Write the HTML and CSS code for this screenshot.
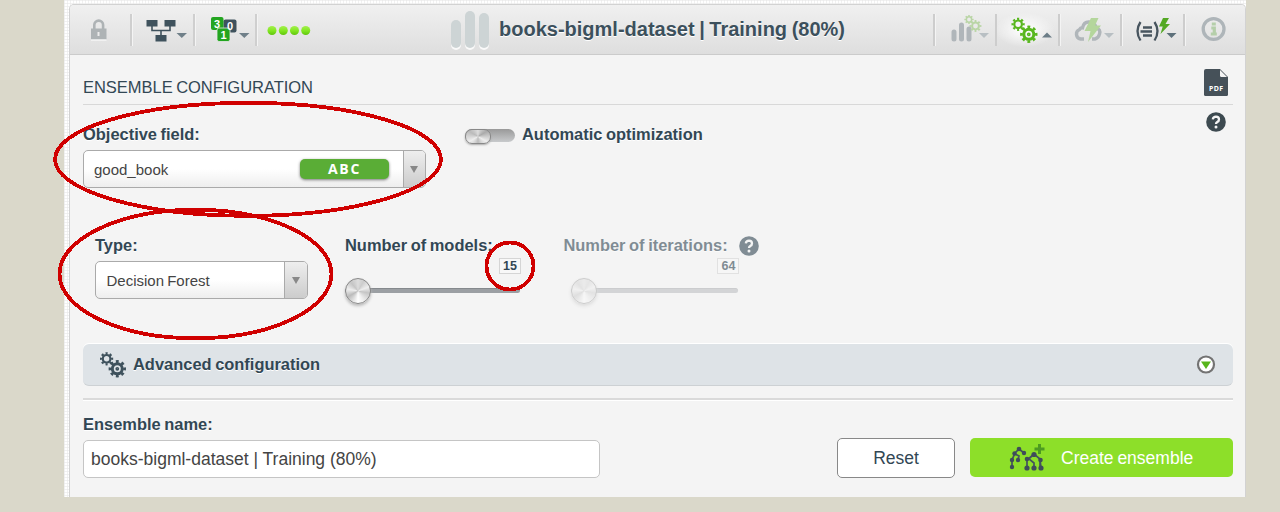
FILE: index.html
```
<!DOCTYPE html>
<html lang="en">
<head>
<meta charset="utf-8">
<title>Ensemble configuration</title>
<link rel="stylesheet" href="styles.css">
</head>
<body>
<svg width="0" height="0" class="defs">
  <defs>
    <g id="gear" fill="none" stroke="currentColor">
      <circle r="5" stroke-width="3"/>
      <circle r="7.3" stroke-width="2.800" pathLength="16" stroke-dasharray="1 1" stroke-dashoffset=".5"/>
      <circle r="1.100" stroke-width="1.600"/>
    </g>
    <g id="gear-small" fill="none" stroke="currentColor">
      <circle r="3.8" stroke-width="2.200"/>
      <circle r="5.5" stroke-width="2.200" pathLength="16" stroke-dasharray="1 1" stroke-dashoffset=".5"/>
    </g>
    <g id="gears">
      <use href="#gear-small" x="6.6" y="6.8"/>
      <use href="#gear" x="17.3" y="16.8"/>
    </g>
    <g id="help">
      <circle cx="10" cy="10" r="9.8" fill="currentColor"/>
      <path d="M6.8 7.3Q7.2 4.7 10 4.7Q13 4.8 13 7.4Q13 9 11.3 10Q10 10.8 10 12.1" fill="none" stroke="#f4f4f4" stroke-width="2.3"/>
      <circle cx="10" cy="14.9" r="1.5" fill="#f4f4f4"/>
    </g>
    <linearGradient id="ball" x2="0" y2="1"><stop stop-color="#a4f04f"/><stop offset=".55" stop-color="#80e61f"/><stop offset="1" stop-color="#60c40e"/></linearGradient>
  </defs>
</svg>
<main class="window">
  <section class="panel">
    <header class="toolbar">
      <div class="cell cell-lock">
        <svg width="18" height="22" viewBox="0 0 18 22"><path d="M4.300 11V6a4.400 4.400 0 0 1 8.800 0v5" fill="none" stroke="#aeb3b5" stroke-width="2.600"/><path d="M1 9.500h15.500v11H1z" fill="#aeb3b5"/><path d="M1 21h15.500" stroke="#fff"/><path d="M7.500 13h2v4h-2z" fill="#ececec"/></svg>
      </div>
      <div class="cell cell-tree">
        <svg width="44" height="26" viewBox="0 0 44 26"><g fill="#3f525d"><path d="M1.500 3h11v6.500h-11zM19.500 3h11v6.500h-11zM10.500 18h11v6.500h-11z"/></g><path d="M7 9v4.500h18V9M16 13.500V18" fill="none" stroke="#3f525d" stroke-width="1.600"/><path d="M31.500 16h10.500l-5.200 5z" fill="#708089"/></svg>
      </div>
      <div class="cell cell-num">
        <svg class="digits" width="42" height="28" viewBox="0 0 42 28"><rect x="13.500" y="3.500" width="13" height="13" rx="2" fill="#3f525d"/><rect x="1" y="1" width="12.500" height="13" rx="2" fill="#23a520"/><rect x="7" y="12" width="13" height="13.500" rx="2" fill="#23a520" stroke="#e8e8e8" stroke-width=".8"/><text x="7" y="11.500">3</text><text x="20" y="14">0</text><text x="13.500" y="23">1</text><path d="M29 17h10.500l-5.200 5z" fill="#708089"/></svg>
      </div>
      <div class="cell cell-dots">
        <svg width="44" height="12" viewBox="0 0 44 12" fill="url(#ball)"><circle cx="5" cy="6.500" r="4.500"/><circle cx="16.300" cy="6.500" r="4.500"/><circle cx="27.500" cy="6.500" r="4.500"/><circle cx="38.700" cy="6.500" r="4.500"/></svg>
      </div>
      <h1 class="title">
        <svg width="38" height="40" viewBox="0 0 38 40"><g fill="#fafafa"><rect y="12" width="10" height="28" rx="5"/><rect x="14" y="3" width="10" height="37" rx="5"/><rect x="28" y="5" width="10" height="35" rx="5"/></g><g fill="#cdd4d5"><rect y="10" width="10" height="28" rx="5"/><rect x="14" y="1" width="10" height="37" rx="5"/><rect x="28" y="3" width="10" height="35" rx="5"/></g></svg>
        <span>books-bigml-dataset | Training (80%)</span>
      </h1>
      <div class="cell cell-action">
        <svg width="62" height="40" viewBox="0 0 62 40"><path d="M19 22v7M26.500 15v14M34 19v10" stroke="#b0b6ba" stroke-width="5" stroke-linecap="round"/><g color="#b9d5a5"><use href="#gear-small" transform="translate(34 9.500) scale(.7)"/><use href="#gear-small" transform="translate(40.500 16) scale(.9)"/></g><path d="M44 23h10l-5 5z" fill="#b8bfc3"/></svg>
      </div>
      <div class="cell cell-action active">
        <svg width="62" height="40" viewBox="0 0 62 40"><g color="#59b71f"><use href="#gears" transform="translate(14.500 7.500)"/></g><path d="M45 27.500h10l-5-5z" fill="#6c7d87"/></svg>
      </div>
      <div class="cell cell-action">
        <svg width="62" height="40" viewBox="0 0 62 40"><path d="M24 29h-3.500a5 5 0 0 1-1-9.500q1-2 3-1.700 1.500-7 8.500-5.600 4.500 1 5 6 5 1 3.500 6-1 4-4.500 4.800h-3" fill="none" stroke="#b0b6ba" stroke-width="3.400"/><path d="M31 8h7.500L35 15.500h6L28 32l2.500-11h-6z" fill="#b4d69c"/><path d="M44 23h10l-5 5z" fill="#b8bfc3"/></svg>
      </div>
      <div class="cell cell-action">
        <svg width="62" height="40" viewBox="0 0 62 40"><path d="M18.500 12q-6 9 0 18.500M32.500 12q6 9 0 18.500M21 17.500h9M18.500 21.500h11.500M21 25.500h9" fill="none" stroke="#48555f" stroke-width="2.300"/><path d="M41 8h6l-3.500 6h4.500L38.500 24l2.200-7.500H37z" fill="#53a824"/><path d="M44.500 23h10l-5 5z" fill="#5d707a"/></svg>
      </div>
      <div class="cell cell-action">
        <svg width="60" height="40" viewBox="0 0 60 40"><circle cx="28.600" cy="19" r="10.400" fill="none" stroke="#aeb5b9" stroke-width="3.300"/><path d="M26.800 14h4M26.300 18h3v6M25.800 24h6" fill="none" stroke="#b5cfaa" stroke-width="3.200"/></svg>
      </div>
    </header>
    <div class="content">
      <div class="section-head">
        <h2>ENSEMBLE CONFIGURATION</h2>
        <svg class="pdf" width="24" height="28" viewBox="0 0 24 28"><path d="M2 0h14l8 8v17.500q0 1.500-1.500 1.500h-21Q0 27 0 25.500V2Q0 0 2 0z" fill="#465159"/><path d="M16 1l7 7h-5.500Q16 8 16 6.500z" fill="#f4f4f4"/><text x="12.200" y="22">PDF</text></svg>
      </div>
      <div class="row objective">
        <div class="field">
          <label>Objective field:</label>
          <div class="select select-wide"><span>good_book</span><b class="tag">ABC</b><i class="drop"></i></div>
        </div>
        <div class="toggle-line"><i class="toggle"><i></i></i><label>Automatic optimization</label></div>
        <svg class="page-help" width="20" height="20"><use href="#help"/></svg>
      </div>
      <div class="row options">
        <div class="field type">
          <label>Type:</label>
          <div class="select"><span>Decision Forest</span><i class="drop"></i></div>
        </div>
        <div class="slider models">
          <label>Number of models:</label>
          <output>15</output>
          <div class="track"><i class="knob"></i></div>
        </div>
        <div class="slider iterations">
          <div class="slider-label"><label>Number of iterations:</label><svg width="20" height="20"><use href="#help"/></svg></div>
          <output>64</output>
          <div class="track"><i class="knob"></i></div>
        </div>
      </div>
      <div class="advanced">
        <svg class="adv-gears" width="28" height="28"><use href="#gears"/></svg>
        <span>Advanced configuration</span>
        <svg class="expand" width="20" height="20" viewBox="0 0 20 20"><circle cx="10" cy="9.500" r="8" fill="#fff" stroke="#737373" stroke-width="2.200"/><path d="M5 6.500h10l-5 7.500z" fill="#58b51c"/></svg>
      </div>
      <footer class="footer">
        <div class="name-field"><label>Ensemble name:</label><input value="books-bigml-dataset | Training (80%)"></div>
        <button class="reset">Reset</button>
        <button class="create">
          <svg width="36" height="30" viewBox="0 0 36 30"><g stroke="#43545d" fill="none" stroke-width="1.700"><path d="M3 26v-7l3-7 4-4 5 4M6 13l4 2-1 4M18 27v-8l7-6 6 5 1 9M25 13l-5 5 5 4v5M31 18v9"/></g><g fill="#3f4d5a"><circle cx="3" cy="26" r="2.200"/><circle cx="3" cy="19" r="2.200"/><circle cx="5.500" cy="12.500" r="2.200"/><circle cx="10" cy="8" r="2.300"/><circle cx="15" cy="12" r="2.200"/><circle cx="9" cy="19" r="2.200"/><circle cx="18" cy="18" r="2.300"/><circle cx="25" cy="13.500" r="2.600"/><circle cx="31.500" cy="19" r="2.300"/><circle cx="18" cy="27" r="2.600"/><circle cx="25" cy="27" r="2.600"/><circle cx="32" cy="27" r="2.600"/></g><path d="M30.500 3v10M25.500 8h10" stroke="#4d9b21" stroke-width="3"/></svg>
          <span>Create ensemble</span>
        </button>
      </footer>
    </div>
  </section>
</main>
<svg class="marks" width="1280" height="512" fill="none" stroke="#d00000" stroke-width="3.800" shape-rendering="crispEdges">
  <ellipse cx="248" cy="159.300" rx="193" ry="56.500"/>
  <ellipse cx="195.500" cy="274" rx="136" ry="64.300"/>
  <circle cx="510" cy="266" r="23.500"/>
</svg>
</body>
</html>
```
FILE: styles.css
```
* { box-sizing: border-box; }
body { margin: 0; width: 1280px; height: 512px; overflow: hidden; background: #dad8ca; font-family: "Liberation Sans", Arial, sans-serif; color: #324754; }
svg { display: block; flex: none; }
i { display: block; font-style: normal; }
.defs { position: absolute; }
.window { width: 1182px; height: 497px; margin-left: 64px; padding: 4px 0 0 5px; background-color: #fff; background-image: repeating-linear-gradient(90deg, #e8e8e899 0 1px, transparent 1px 3px), repeating-linear-gradient(#e8e8e899 0 1px, transparent 1px 3px); }
.panel { height: 493px; border: 1px solid #d2d2d2; border-bottom: 0; border-radius: 5px 5px 0 0; background: #f4f4f4; overflow: hidden; }
.toolbar { display: flex; align-items: center; height: 50px; background: linear-gradient(#f0f0f0, #dedede); border-bottom: 1px solid #cbcbcb; }
.cell { display: flex; align-items: center; height: 32px; }
.cell-lock { width: 60px; padding-left: 20px; }
.cell-tree, .cell-num { width: 63px; border-left: 2px solid #cfcfcf; box-shadow: inset 1px 0 #f4f4f4; padding-left: 13px; }
.cell-num { width: 62px; padding-left: 15px; }
.cell-dots { width: 196px; border-left: 2px solid #cfcfcf; box-shadow: inset 1px 0 #f4f4f4; padding-left: 10px; }
.digits text { font: bold 11px "Liberation Sans", sans-serif; fill: #fff; text-anchor: middle; }
.title { display: flex; flex: 1; align-items: center; gap: 10px; margin: 0; font-size: 20px; word-spacing: -1px; white-space: nowrap; color: #3c505c; text-shadow: 0 1px #fff; }
.cell-action { width: 62.500px; border-left: 2px solid #cdcdcd; box-shadow: inset 1px 0 #f4f4f4; }
.active { height: 38px; background: radial-gradient(ellipse at 28px 50%, #fff, #fff0 30px); border-image: linear-gradient(transparent 3px, #cdcdcd 3px 35px, transparent 35px) 0 0 0 2; box-shadow: none; }
.content { padding: 0 12px 0 13px; }
.section-head { display: flex; justify-content: space-between; align-items: flex-start; height: 50px; padding: 14px 5px 0 0; border-bottom: 1px solid #d8d8d8; }
h2 { margin: 9px 0 0; font-size: 16.500px; letter-spacing: -.03px; word-spacing: -1px; line-height: 19px; font-weight: normal; }
.pdf text { font: bold 7px "Noto Sans", sans-serif; letter-spacing: .4px; fill: #fff; text-anchor: middle; }
label { display: block; font-size: 16.450px; word-spacing: -1px; line-height: 20px; font-weight: bold; white-space: nowrap; text-shadow: 0 1px #fff; }
.row { display: flex; align-items: flex-start; }
.objective { height: 111px; padding-top: 19px; }
.select { display: flex; align-items: center; width: 213px; height: 38px; margin-top: 6px; padding-left: 10.500px; border: 1px solid #aaa; border-radius: 5px; background: linear-gradient(#fff 50%, #eee); font-size: 15px; word-spacing: -1px; color: #444; overflow: hidden; }
.select-wide { width: 343px; padding-left: 10px; }
.select span { flex: 1; }
.tag { width: 89px; height: 20px; margin: 0 14px 1px 0; border-radius: 5px; background: #5aad36; box-shadow: 0 1px 3px #777; font: bold 14px/20px "Open Sans", sans-serif; letter-spacing: 1.700px; text-align: center; color: #fff; }
.drop { display: flex; align-items: center; justify-content: center; width: 23px; height: 36px; border-left: 1px solid #aaa; background: linear-gradient(#eee, #ccc); }
.select-wide .drop { width: 22px; }
.drop::after { content: ""; margin-right: 1px; border: 4px solid transparent; border-top: 7px solid #888; border-bottom: 0; }
.toggle-line { display: flex; gap: 7px; margin-left: 39px; }
.toggle { width: 50px; height: 13px; margin-top: 5px; border-radius: 7px; background: linear-gradient(#999, #c8cacc); }
.toggle i { width: 26px; height: 15px; border: 1px solid #888; border-radius: 7px; background: conic-gradient(#ddd, #aaa, #eee, #bbb, #eee, #bbb, #ddd); box-shadow: 0 1px 2px #aaa; }
.page-help { margin: -12px 7px 0 auto; color: #3d4a50; }
.options { height: 123px; padding: 19px 0 0 12px; }
.slider { width: 175px; }
.models { margin-left: 37px; }
.iterations { margin-left: 43.400px; width: 196px; opacity: .6; }
.slider-label { display: flex; justify-content: space-between; align-items: center; height: 20px; }
.slider-label svg { margin-top: 1px; }
output { display: block; width: 22px; height: 16px; margin: 3px 0 0 154px; border: 1px solid #d5d5d5; background: #f8f8f8; font-size: 12.500px; font-weight: bold; line-height: 14px; text-align: center; }
.track { height: 5px; margin-top: 14px; border-radius: 3px; background: #9b9fa3; border-top: 1px solid #85898d; }
.iterations .track { width: 167px; margin-left: 8px; opacity: .6; }
.knob { width: 26px; height: 26px; margin-top: -11px; border: 1px solid #888; border-radius: 50%; background: conic-gradient(#ddd, #ccc 30deg, #eee 70deg, #c5c5c5 100deg, #eee 150deg, #fff 180deg, #bbb 240deg, #eee 280deg, #c5c5c5 320deg, #ddd); box-shadow: 0 2px 3px #bbb; }
.advanced { display: flex; align-items: center; height: 42px; margin-top: 5px; padding: 0 17px; border-bottom: 1px solid #cdd1d4; border-radius: 6px; background: #dee3e7; box-shadow: 0 -1px #fff; font-size: 16.450px; word-spacing: -1px; font-weight: bold; text-shadow: 0 1px #fff; }
.adv-gears { color: #3f525d; margin: 2px 5px 0 0; }
.expand { margin-left: auto; }
.footer { display: flex; align-items: flex-start; margin-top: 12px; padding-top: 38px; border-top: 2px solid #dadada; box-shadow: inset 0 1px #fff; }
.name-field { width: 517px; margin: -24px 237px 0 0; }
input { display: block; width: 517px; height: 38px; margin-top: 6px; padding: 0 7px; border: 1px solid #c5c5c5; border-radius: 5px; background: #fff; font: 17.500px "Liberation Sans", sans-serif; color: #444; }
button { height: 40px; padding: 0; border-radius: 5px; font: 17.500px "Liberation Sans", sans-serif; word-spacing: -1px; }
.reset { width: 118px; border: 1px solid #888; background: #fff; color: #324754; }
.create { display: flex; align-items: center; width: 263px; height: 39px; margin-left: 15px; padding-left: 39px; border: 0; background: #8ddf29; color: #fff; gap: 16px; }
.create svg { margin-top: -4px; }
.create span { padding-top: 1px; }
.marks { position: absolute; top: 0; left: 0; }
```
